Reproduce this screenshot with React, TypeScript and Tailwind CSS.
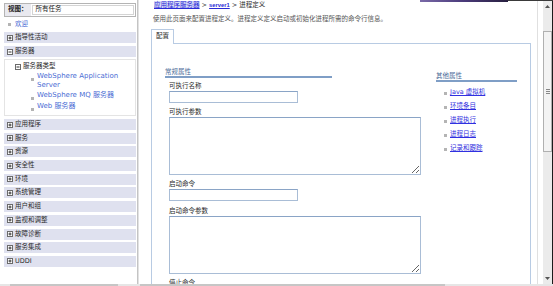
import React from 'react';

const FONT = "font-['DejaVu_Sans','Noto_Sans_CJK_SC',sans-serif]";

function ToggleIcon({ open }: { open?: boolean }) {
  return (
    <svg width="6" height="6" viewBox="0 0 6 6" className="shrink-0">
      <rect x="0.5" y="0.5" width="5" height="5" fill="white" stroke="#6b6b6b" strokeWidth="1" />
      <line x1="1.5" y1="3" x2="4.5" y2="3" stroke="#333" strokeWidth="1" />
      {!open && <line x1="3" y1="1.5" x2="3" y2="4.5" stroke="#333" strokeWidth="1" />}
    </svg>
  );
}

const Bullet = () => <span className="inline-block h-[3px] w-[3px] shrink-0 bg-[#b4b4b4]" />;

function Band({ label, open }: { label: string; open?: boolean }) {
  return (
    <div className="flex h-[11px] items-center gap-[2px] bg-[#dfe1ef] pl-[3px] text-[6.5px] leading-[11px] text-[#2a2a2a]">
      <ToggleIcon open={open} />
      <span>{label}</span>
    </div>
  );
}

const lowerNav = ['应用程序', '服务', '资源', '安全性', '环境', '系统管理', '用户和组', '监视和调整', '故障诊断', '服务集成', 'UDDI'];

const otherProps = ['Java 虚拟机', '环境条目', '进程执行', '进程日志', '记录和跟踪'];

function Field({ label, area }: { label: string; area?: boolean }) {
  return (
    <div className="flex flex-col">
      <div className="h-[10px] text-[6.5px] leading-[10px] text-[#2a2a2a]">{label}</div>
      {area ? (
        <textarea
          readOnly
          className="h-[58px] w-[252px] border border-[#a9bdd6] border-t-[#8aa4c6] bg-white"
        />
      ) : (
        <div className="h-[12px] w-[129px] border border-[#a9bdd6] border-t-[#8aa4c6] bg-white" />
      )}
    </div>
  );
}

export default function App() {
  return (
    <div className={`relative flex h-[286px] w-[553px] flex-col overflow-hidden bg-white ${FONT}`}>
      {/* top window edge */}
      <div className="absolute left-[420px] top-0 h-[2px] w-[88px] bg-gradient-to-r from-[#7a6aa8] via-[#4a3a7a] to-[#282040]" />
      <div className="absolute left-[508px] top-0 h-px w-[45px] bg-[#3a3a3a]" />

      <div className="flex h-[284px] overflow-hidden">
        {/* ===== left nav ===== */}
        <aside className="flex w-[138px] shrink-0 flex-col border-r border-[#c4c4c4] pl-[4px] pr-[1px] pt-[3px]">
          <div className="flex h-[14px] items-stretch border border-[#b4b4b4]">
            <div className="flex items-center bg-[#e9e9ef] px-[3px] text-[6.5px] font-bold text-[#222]">视图：</div>
            <div className="m-px flex flex-1 items-center border border-[#d4d4d4] bg-white pl-[3px] text-[6.5px] text-[#222]">
              所有任务
            </div>
          </div>
          <div className="mt-[2px] flex h-[11px] items-center gap-[4px] pl-[4px] text-[6.5px] text-[#4a6cd4]">
            <Bullet />
            <span>欢迎</span>
          </div>
          <div className="mt-[2px] flex flex-col gap-[3px]">
            <Band label="指导性活动" />
            <Band label="服务器" open />
          </div>
          <div className="mt-[2px] flex h-[57px] flex-col border border-[#e4e4e4] pl-[10px] pt-[1px] text-[6.5px]">
            <div className="flex h-[11px] items-center gap-[2px] text-[#2a2a2a]">
              <ToggleIcon open />
              <span>服务器类型</span>
            </div>
            <div className="flex flex-col pl-[22px] pr-[2px] text-[7px] leading-[8.5px] text-[#4a6cd4]">
              <div className="relative">
                <span className="absolute left-[-6px] top-[3px]"><Bullet /></span>
                WebSphere Application Server
              </div>
              <div className="relative mt-[2px]">
                <span className="absolute left-[-6px] top-[3px]"><Bullet /></span>
                WebSphere MQ 服务器
              </div>
              <div className="relative mt-[2.5px]">
                <span className="absolute left-[-6px] top-[3px]"><Bullet /></span>
                Web 服务器
              </div>
            </div>
          </div>
          <div className="mt-[3px] flex flex-col gap-[2.7px]">
            {lowerNav.map((l) => (
              <Band key={l} label={l} />
            ))}
          </div>
        </aside>

        {/* ===== main ===== */}
        <main className="flex w-[399px] shrink-0 flex-col border-l border-[#e2e2e2]">
          <div className="h-[10px] pl-[15px] text-[6.5px] leading-[10px] text-[#2a2a2a]">
            <a className="bg-[#d6d9f6] text-[#2a2ad6] underline">应用程序服务器</a>
            <span> &gt; </span>
            <a className="font-['Liberation_Sans',sans-serif] text-[5.8px] font-bold text-[#2a2ad6] underline">server1</a>
            <span> &gt; 进程定义</span>
          </div>
          <div className="mt-[4px] h-[10px] whitespace-nowrap pl-[14px] text-[6.5px] leading-[10px] text-[#555]">
            使用此页面来配置进程定义。进程定义定义启动或初始化进程所需的命令行信息。
          </div>

          <div className="ml-[12px] mt-[5px] flex w-[380px] flex-col">
            <div className="relative z-10 -mb-px flex h-[15px] w-[23px] items-center justify-center border border-b-0 border-[#b8cbe3] bg-white text-[6.5px] text-[#2a2a2a]">
              配置
            </div>
            <div className="flex h-[260px] border border-[#b8cbe3] pl-[13px] pr-[13px]">
              {/* general props */}
              <div className="flex w-[271px] flex-col pt-[24px]">
                <div className="w-[167px] border-b-2 border-[#7f9ec6] text-[6.5px] leading-[8px] text-[#4a6a98]">常规属性</div>
                <div className="mt-[3px] flex flex-col pl-[4px]">
                  <Field label="可执行名称" />
                  <div className="mt-[4px]">
                    <Field label="可执行参数" area />
                  </div>
                  <div className="mt-[4px]">
                    <Field label="启动命令" />
                  </div>
                  <div className="mt-[5px]">
                    <Field label="启动命令参数" area />
                  </div>
                  <div className="mt-[4px] h-[10px] text-[6.5px] leading-[10px] text-[#2a2a2a]">停止命令</div>
                </div>
              </div>
              {/* other props */}
              <div className="flex w-[81px] flex-col pt-[28px]">
                <div className="border-b-2 border-[#7f9ec6] text-[6.5px] leading-[8px] text-[#4a6a98]">其他属性</div>
                <div className="mt-[4px] flex flex-col">
                  {otherProps.map((p) => (
                    <div key={p} className="flex h-[14px] items-center gap-[3px] pl-[8px] text-[6.5px]">
                      <Bullet />
                      <a className="text-[#3030e0] underline">{p}</a>
                    </div>
                  ))}
                </div>
              </div>
            </div>
          </div>
        </main>

        <div className="w-px shrink-0 bg-[#e0e0e0]" />
        <div className="w-[5px] shrink-0" />

        {/* ===== scrollbar ===== */}
        <div className="flex w-[10px] shrink-0 flex-col border-r border-[#1c1c1c] bg-[#ebebeb]">
          <div className="flex h-[12px] items-center justify-center">
            <svg width="5" height="3" viewBox="0 0 5 3">
              <path d="M0 3 L2.5 0 L5 3 Z" fill="#555" />
            </svg>
          </div>
          <div className="mt-[19px] flex h-[121px] items-center justify-center border border-[#b0b0b0] bg-[#f3f3f3]">
            <div className="flex flex-col gap-px">
              <div className="h-px w-[4px] bg-[#888]" />
              <div className="h-px w-[4px] bg-[#888]" />
              <div className="h-px w-[4px] bg-[#888]" />
            </div>
          </div>
          <div className="flex-1" />
          <div className="flex h-[12px] items-center justify-center">
            <svg width="5" height="3" viewBox="0 0 5 3">
              <path d="M0 0 L2.5 3 L5 0 Z" fill="#555" />
            </svg>
          </div>
        </div>
      </div>

      {/* bottom h-scroll edge */}
      <div className="flex h-[2px] bg-[#e6e6e6]">
        <div className="ml-[10px] w-[108px] bg-[#c6c6c6]" />
        <div className="ml-[22px] w-[305px] bg-[#c6c6c6]" />
      </div>
    </div>
  );
}
